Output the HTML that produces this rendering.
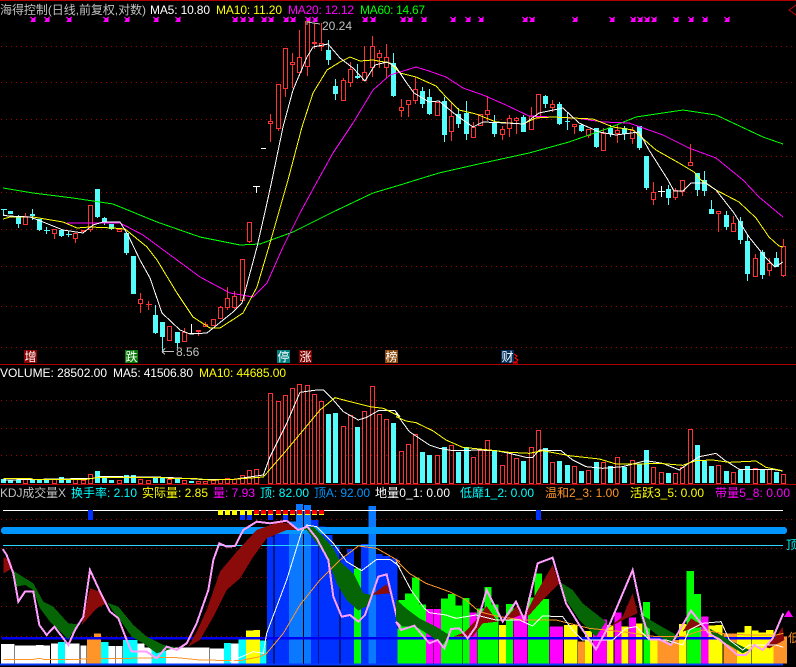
<!DOCTYPE html>
<html><head><meta charset="utf-8"><style>
html,body{margin:0;padding:0;background:#000;width:796px;height:667px;overflow:hidden}
svg{display:block}
text{font:12px "Liberation Sans","WenQuanYi Zen Hei","Noto Sans CJK SC",sans-serif}
</style></head><body>
<svg width="796" height="667" viewBox="0 0 796 667" shape-rendering="crispEdges">
<rect width="796" height="667" fill="#000"/>
<defs><path id="s" d="M-2.5-2.5l5 5M2.5-2.5l-5 5M-1-1h3v3h-3z" fill="#f0f" stroke="#f0f"/></defs>
<!-- separators and grid -->
<path d="M0 .5H796M0 364.5H796M0 484.5H796" stroke="#b00000" fill="none"/>
<path d="M1 46.5H796M1 82.5H796M1 119.5H796M1 156.5H796M1 192.5H796M1 229.5H796M1 266.5H796M1 306.5H796M1 347.5H796M1 400.5H796M1 428.5H796M1 455.5H796M1 519.5H796M1 548.5H796M1 577.5H796M1 606.5H796M1 636.5H796" stroke="#a00000" stroke-dasharray="1 4" fill="none"/>
<path d="M796 5L789 10L796 15" stroke="#c00000" fill="none"/>
<!-- stars -->
<g><use href="#s" x="33" y="19.5"/><use href="#s" x="47" y="19.5"/><use href="#s" x="69" y="19.5"/><use href="#s" x="106" y="19.5"/><use href="#s" x="127" y="19.5"/><use href="#s" x="156" y="19.5"/><use href="#s" x="178" y="19.5"/><use href="#s" x="235" y="19.5"/><use href="#s" x="243" y="19.5"/><use href="#s" x="251" y="19.5"/><use href="#s" x="264" y="19.5"/><use href="#s" x="271" y="19.5"/><use href="#s" x="286" y="19.5"/><use href="#s" x="293" y="19.5"/><use href="#s" x="308" y="19.5"/><use href="#s" x="315" y="19.5"/><use href="#s" x="365" y="19.5"/><use href="#s" x="373" y="19.5"/><use href="#s" x="403" y="19.5"/><use href="#s" x="410" y="19.5"/><use href="#s" x="424" y="19.5"/><use href="#s" x="453" y="19.5"/><use href="#s" x="468" y="19.5"/><use href="#s" x="481" y="19.5"/><use href="#s" x="525" y="19.5"/><use href="#s" x="532" y="19.5"/><use href="#s" x="575" y="19.5"/><use href="#s" x="612" y="19.5"/><use href="#s" x="633" y="19.5"/><use href="#s" x="640" y="19.5"/><use href="#s" x="647" y="19.5"/><use href="#s" x="654" y="19.5"/><use href="#s" x="676" y="19.5"/><use href="#s" x="691" y="19.5"/><use href="#s" x="705" y="19.5"/><use href="#s" x="727" y="19.5"/></g>
<!-- red wicks -->
<path fill="none" stroke="#ff3232" d="M25.5 213V225M54.5 234V239M75.5 239V243M90.5 230V232M119.5 228V232M140.5 293V313M148.5 301V310M146 304.5H152M184.5 328V342M198.5 332V336M205.5 322V327M220.5 306V319M227.5 287V310M234.5 291V309M249.5 242V243M270.5 114V142M278.5 129V131M285.5 89V97M292.5 53V88M299.5 30V73M307.5 67V76M314.5 23V49M321.5 23V51M343.5 78V80M350.5 62V87M364.5 46V81M372.5 36V77M379.5 50V68M386.5 44V78M401.5 99V117M408.5 105V117M415.5 77V104M451.5 102V141M473.5 122V127M487.5 96V121M502.5 126V140M509.5 115V137M516.5 117V134M531.5 107V130M552.5 100V112M574.5 127V134M588.5 136V138M603.5 128V133M617.5 125V143M632.5 127V144M653.5 182V205M675.5 188V200M682.5 192V196M690.5 144V166M718.5 214V232M733.5 216V223M755.5 254V258M769.5 258V276M783.5 239V277"/>
<!-- red bodies -->
<path fill="#000" stroke="#ff3232" d="M23.5 216.5h4v8h-4zM52.5 229.5h4v4h-4zM73.5 233.5h4v5h-4zM81.5 230.5h4v1h-4zM88.5 205.5h4v24h-4zM117.5 229.5h4v2h-4zM138.5 299.5h4v4h-4zM167.5 326.5h4v14h-4zM182.5 332.5h4v9h-4zM196.5 330.5h4v1h-4zM203.5 324.5h4v2h-4zM211.5 319.5h4v6h-4zM218.5 307.5h4v11h-4zM225.5 298.5h4v9h-4zM232.5 296.5h4v11h-4zM240.5 259.5h4v41h-4zM247.5 222.5h4v19h-4zM268.5 121.5h4v2h-4zM276.5 84.5h4v44h-4zM283.5 48.5h4v40h-4zM290.5 62.5h4v2h-4zM297.5 57.5h4v15h-4zM305.5 21.5h4v45h-4zM312.5 42.5h4v1h-4zM319.5 43.5h4v3h-4zM341.5 80.5h4v20h-4zM348.5 69.5h4v13h-4zM362.5 72.5h4v8h-4zM370.5 46.5h4v21h-4zM377.5 53.5h4v4h-4zM384.5 57.5h4v10h-4zM399.5 107.5h4v3h-4zM406.5 100.5h4v4h-4zM413.5 89.5h4v11h-4zM435.5 102.5h4v13h-4zM449.5 116.5h4v15h-4zM471.5 127.5h4v10h-4zM478.5 114.5h4v11h-4zM485.5 110.5h4v4h-4zM500.5 129.5h4v5h-4zM507.5 118.5h4v10h-4zM514.5 118.5h4v2h-4zM529.5 116.5h4v13h-4zM536.5 94.5h4v23h-4zM550.5 104.5h4v3h-4zM572.5 124.5h4v2h-4zM586.5 129.5h4v6h-4zM601.5 133.5h4v17h-4zM615.5 130.5h4v3h-4zM630.5 130.5h4v8h-4zM651.5 192.5h4v7h-4zM673.5 190.5h4v7h-4zM680.5 180.5h4v11h-4zM688.5 162.5h4v3h-4zM716.5 211.5h4v2h-4zM731.5 223.5h4v8h-4zM753.5 258.5h4v18h-4zM767.5 263.5h4v7h-4zM781.5 246.5h4v29h-4z"/>
<!-- cyan wicks -->
<path fill="none" stroke="#54fcfc" d="M3.5 209V216M18.5 215V228M32.5 209V220M39.5 230V231M46.5 227V234M44 230.5H50M61.5 229V237M68.5 231V237M66 234.5H72M97.5 217V218M104.5 217V225M111.5 229V230M126.5 253V255M155.5 305V334M162.5 337V353M177.5 343V348M328.5 40V65M335.5 79V100M357.5 64V79M393.5 53V97M422.5 87V108M429.5 89V115M444.5 97V142M458.5 108V128M466.5 101V140M494.5 115V137M523.5 115V132M545.5 95V108M559.5 102V125M567.5 112V130M581.5 124V132M596.5 147V148M610.5 125V137M624.5 126V140M639.5 148V150M646.5 188V190M668.5 185V205M697.5 173V196M704.5 171V196M711.5 200V214M726.5 211V230M740.5 217V244M747.5 235V281M762.5 250V279M776.5 252V267M1 209.5H7"/>
<!-- cyan bodies -->
<path fill="none" stroke="#54fcfc" stroke-width="5" d="M10.5 211V214M18.5 217V224M32.5 214V216M39.5 219V230M61.5 230V236M97.5 189V217M104.5 218V222M111.5 224V229M126.5 233V253M133.5 256V294M155.5 315V333M162.5 322V337M177.5 332V343M328.5 50V60M335.5 86V94M357.5 76V78M393.5 63V96M422.5 91V104M429.5 97V114M444.5 101V135M458.5 114V124M466.5 113V134M494.5 122V134M523.5 117V132M545.5 96V104M559.5 104V124M567.5 121V122M581.5 125V131M596.5 128V147M610.5 128V134M624.5 128V134M639.5 126V148M646.5 156V188M668.5 189V198M697.5 173V190M704.5 180V191M711.5 209V214M726.5 215V227M740.5 221V240M747.5 241V274M762.5 252V275M776.5 258V267"/>
<!-- white doji -->
<path fill="none" stroke="#fff" d="M191.5 324V333M188 333.5H195M256.5 186V193M253 186.5H260M261 148.5H266M661.5 186V197M658 191.5H665"/>
<!-- MA lines -->
<path fill="none" stroke="#0f0" d="M3 188L33 193L73 198L113 204L157 222L200 237L240 245L260 244L293 232L333 212L373 193L400 185L416 180L439 173L483 163L529 153L569 142L609 128L636 117L683 110L716 115L763 137L783 144"/>
<path fill="none" stroke="#f0f" d="M67 223L120 223L143 235L177 260L200 277L230 293L253 297L267 283L283 247L300 213L318 180L333 153L353 123L373 90L390 75L400 72L416 67L429 71L446 77L463 88L483 95L506 105L529 116L553 117L576 118L603 122L629 123L663 135L689 148L716 158L743 180L759 197L783 217"/>
<path fill="none" stroke="#ff0" d="M3 219L10 217L33 217L63 222L77 228L90 227L113 228L125 229L147 247L157 260L177 293L193 317L210 328L220 328L243 313L257 287L270 243L288 180L302 127L313 93L327 70L340 62L350 57L360 61L373 60L390 63L400 73L416 77L436 86L446 97L459 110L476 114L496 122L523 124L536 118L553 117L593 119L613 127L633 130L656 150L679 163L694 172L701 180L716 190L739 202L756 218L769 237L779 246L783 247"/>
<path fill="none" stroke="#fff" d="M3 215L8 216L30 217L43 222L63 230L83 233L93 225L103 222L120 222L128 235L140 260L150 278L162 313L180 330L190 334L207 333L233 312L242 303L257 247L267 203L272 180L283 127L293 90L307 57L313 47L328 44L340 58L353 68L365 81L375 65L387 62L396 67L406 82L414 93L429 102L439 101L456 115L473 127L483 122L506 123L524 124L539 113L563 108L579 123L599 132L616 135L639 132L649 150L668 180L674 191L683 191L691 183L706 183L716 190L734 213L749 237L766 258L775 267L783 262"/>
<!-- arrows -->
<path fill="none" stroke="#c0c0c0" d="M307 22L320 24M307 22v3M307 22h3M162 351.5H174M162 351.5l3-3M162 351.5l3 3"/>
<!-- date labels -->
<g><rect x="24" y="350" width="13" height="13" fill="#8b0000"/><rect x="125" y="350" width="13" height="13" fill="#0a7a0a"/><rect x="277" y="350" width="13" height="13" fill="#008080"/><rect x="299" y="350" width="13" height="13" fill="#800000"/><rect x="385" y="350" width="13" height="13" fill="#8b4a10"/><rect x="501" y="350" width="13" height="13" fill="#003060"/></g>
<path fill="none" stroke="#f00" d="M514 354l3 2-2 2 3 2-2 2h-3M513 363h5"/>
<g fill="#fff"><text x="24.5" y="361">增</text><text x="125.5" y="361">跌</text><text x="277.5" y="361">停</text><text x="299.5" y="361">涨</text><text x="385.5" y="361">榜</text><text x="501.5" y="361">财</text></g>
<!-- volume bars -->
<path fill="none" stroke="#54fcfc" stroke-width="5" d="M3.5 479V483M10.5 480V483M18.5 480V483M32.5 480V483M39.5 480V483M46.5 480V483M61.5 477V483M68.5 480V483M97.5 471V483M104.5 477V483M111.5 480V483M126.5 475V483M133.5 475V483M155.5 478V483M162.5 478V483M177.5 479V483M191.5 481V483M328.5 414V483M335.5 413V483M357.5 427V483M393.5 423V483M422.5 452V483M429.5 455V483M444.5 447V483M458.5 452V483M466.5 447V483M494.5 450V483M523.5 461V483M545.5 448V483M559.5 461V483M567.5 465V483M581.5 471V483M596.5 462V483M610.5 466V483M624.5 467V483M639.5 464V483M646.5 450V483M668.5 473V483M697.5 445V483M704.5 461V483M711.5 466V483M726.5 471V483M740.5 470V483M747.5 466V483M762.5 470V483M776.5 472V483"/>
<path fill="none" stroke="#ff3232" d="M23.5 479.5h4V483.5h-4zM52.5 479.5h4V483.5h-4zM73.5 478.5h4V483.5h-4zM81.5 480.5h4V483.5h-4zM88.5 474.5h4V483.5h-4zM117.5 480.5h4V483.5h-4zM138.5 479.5h4V483.5h-4zM146.5 480.5h4V483.5h-4zM167.5 479.5h4V483.5h-4zM182.5 480.5h4V483.5h-4zM196.5 481.5h4V483.5h-4zM203.5 481.5h4V483.5h-4zM211.5 480.5h4V483.5h-4zM218.5 479.5h4V483.5h-4zM225.5 478.5h4V483.5h-4zM232.5 479.5h4V483.5h-4zM240.5 475.5h4V483.5h-4zM247.5 470.5h4V483.5h-4zM254.5 469.5h4V483.5h-4zM268.5 393.5h4V483.5h-4zM276.5 401.5h4V483.5h-4zM283.5 395.5h4V483.5h-4zM290.5 388.5h4V483.5h-4zM297.5 384.5h4V483.5h-4zM305.5 385.5h4V483.5h-4zM312.5 394.5h4V483.5h-4zM319.5 401.5h4V483.5h-4zM341.5 426.5h4V483.5h-4zM348.5 415.5h4V483.5h-4zM362.5 411.5h4V483.5h-4zM370.5 386.5h4V483.5h-4zM377.5 414.5h4V483.5h-4zM384.5 419.5h4V483.5h-4zM399.5 451.5h4V483.5h-4zM406.5 444.5h4V483.5h-4zM413.5 434.5h4V483.5h-4zM435.5 455.5h4V483.5h-4zM449.5 445.5h4V483.5h-4zM471.5 457.5h4V483.5h-4zM478.5 450.5h4V483.5h-4zM485.5 440.5h4V483.5h-4zM500.5 465.5h4V483.5h-4zM507.5 452.5h4V483.5h-4zM514.5 458.5h4V483.5h-4zM529.5 447.5h4V483.5h-4zM536.5 430.5h4V483.5h-4zM550.5 462.5h4V483.5h-4zM572.5 466.5h4V483.5h-4zM586.5 470.5h4V483.5h-4zM601.5 462.5h4V483.5h-4zM615.5 457.5h4V483.5h-4zM630.5 460.5h4V483.5h-4zM651.5 467.5h4V483.5h-4zM659.5 472.5h4V483.5h-4zM673.5 473.5h4V483.5h-4zM680.5 467.5h4V483.5h-4zM688.5 429.5h4V483.5h-4zM716.5 465.5h4V483.5h-4zM731.5 472.5h4V483.5h-4zM753.5 468.5h4V483.5h-4zM767.5 469.5h4V483.5h-4zM781.5 474.5h4V483.5h-4z"/>
<!-- volume MA -->
<g transform="translate(0,360) scale(.33333)" fill="none" stroke-width="3">
<path stroke="#fff" d="M10 360L280 355L300 350L350 350L500 352L600 358L700 358L790 345L810 290L860 190L900 97L950 90L970 90L1000 120L1030 155L1075 180L1100 172L1135 152L1185 152L1200 170"/>
<path stroke="#ff0" d="M10 355L90 355L100 358L260 358L290 353L490 352L510 356L590 356L630 360L700 358L790 351L860 270L960 150L1005 113L1050 125L1110 140L1150 145L1200 170"/>
</g>
<g transform="translate(396,360) scale(.33333)" fill="none" stroke-width="3">
<path stroke="#fff" d="M0 160L40 215L100 255L130 265L170 272L200 272L240 270L300 272L340 280L390 292L410 292L430 270L495 272L530 300L570 320L620 325L680 320L710 312L750 302L800 310L850 330L875 312L910 290L960 280L985 300L1030 328L1130 328L1160 333"/>
<path stroke="#ff0" d="M0 170L30 183L60 188L110 212L150 240L200 262L300 272L340 277L400 280L440 272L520 287L610 297L660 312L730 312L790 310L860 316L900 302L950 300L1000 307L1080 303L1110 322L1160 332"/>
</g>
<!-- KDJ panel left -->
<g transform="translate(0,480) scale(.33333)">
<path fill="#fff" d="M3 492H43V550H3zM44 496H65V550H44zM65 497H108V550H65zM108 495H130V550H108zM130 497H150V550H130zM152 491H174V550H152zM195 491H238V550H195zM240 496H260V550H240zM325 498H368V550H325zM412 490H433V550H412zM433 502H455V550H433zM498 505H520V550H498zM520 502H628V550H520zM630 505H672V550H630zM693 491H716V550H693z"/>
<path fill="#0ff" d="M174 486H195V550H174zM303 486H325V550H303zM369 480H412V550H369zM455 505H498V550H455zM672 489H693V550H672zM716 476H738V550H716zM780 482H800V550H780z"/>
<path fill="#ff9428" d="M261 476H303V550H261zM282 461H303V476H282z"/>
<path fill="#ff0" d="M738 452H760V550H738zM760 450H780V550H760z"/>
<path fill="#0032ff" d="M801 170H822V550H801zM823 160H867V550H823zM933 120H955V550H933zM955 140H976V550H955zM976 165H997V550H976zM997 200H1018V550H997zM1020 230H1041V550H1020zM1041 207H1062V550H1041zM1083 192H1105V550H1083zM1128 222H1148V550H1128zM1148 228H1170V550H1148zM1170 235H1192V550H1170z"/>
<path fill="#0a78ff" d="M867 125H888V550H867zM888 72H909V550H888zM912 75H933V550H912zM1106 78H1128V550H1106z"/>
<path fill="#0f0" d="M1062 265H1083V550H1062zM1192 445H1200V550H1192z"/>
<path fill="#000" d="M43 495H45V550H43zM151 491H153V550H151zM239 491H241V550H239zM346 498H348V550H346zM628 502H630V550H628zM821 170H823V550H821zM955 140H957V550H955zM1019 200H1021V550H1019z"/>
<path fill="#0000f0" d="M5 471H1200V478H5z"/>
</g>
<!-- KDJ panel right -->
<g transform="translate(396,480) scale(.33333)">
<path fill="#0f0" d="M7 360H27V550H7zM27 340H48V550H27zM48 293H70V550H48zM70 373H90V550H70zM135 355H156V550H135zM156 342H178V550H156zM178 376H199V550H178zM200 354H221V550H200zM243 385H265V550H243zM265 321H286V550H265zM286 373H307V550H286zM330 372H352V550H330zM395 352H416V550H395zM416 280H438V550H416zM438 357H459V550H438zM741 366H762V550H741zM872 273H894V550H872zM894 342H915V550H894z"/>
<path fill="#f0f" d="M90 387H112V550H90zM113 387H135V550H113zM221 397H243V550H221zM352 405H394V550H352zM460 440H501V550H460zM590 418H633V550H590zM655 397H676V550H655zM699 412H720V550H699zM915 410H937V550H915z"/>
<path fill="#ff0" d="M308 435H330V550H308zM503 435H545V550H503zM567 453H588V550H567zM633 435H654V550H633zM676 440H698V550H676zM720 430H741V550H720zM762 480H784V550H762zM849 432H871V550H849zM937 437H958V550H937zM958 435H980V550H958zM1023 458H1045V550H1023zM1045 438H1066V550H1045zM1066 452H1088V550H1066zM1088 458H1110V550H1088zM1110 450H1132V550H1110z"/>
<path fill="#ff9428" d="M546 485H567V550H546zM785 480H849V550H785zM980 460H1023V550H980zM1132 470H1173V550H1132z"/>
<path fill="#000" d="M112 387H114V550H112zM199 376H201V550H199zM243 440H245V550H243zM307 420H309V550H307zM351 400H353V550H351zM394 350H396V550H394zM502 430H504V550H502zM589 450H591V550H589zM653 430H655V550H653zM740 430H742V550H740zM871 430H873V550H871zM980 460H982V550H980zM1066 440H1068V550H1066z"/>
<path fill="#0032ff" d="M0 400H5V471H0z"/>
<path fill="#0000f0" d="M0 471H1162V478H0z"/>
</g>
<!-- thick bar, horizontal lines -->
<rect x="1" y="527" width="786" height="7" rx="3" fill="#0096ff"/>
<path d="M3 510.5H783" stroke="#fff" fill="none"/>
<path d="M3 545.5H783" stroke="#2ad4ff" fill="none"/>
<path d="M0 664.5H783" stroke="#0a3cff" stroke-width="2" fill="none"/>
<!-- KDJ bands & lines left -->
<g transform="translate(0,480) scale(.33333)">
<path fill="#8b0a0a" d="M10 232L30 238L38 265L10 280ZM245 435L270 325L300 335L322 368L290 385ZM565 500L590 455L620 390L660 275L710 215L770 150L840 125L880 135L895 150L860 150L800 175L760 230L720 295L680 330L640 410L600 480ZM1115 345L1160 312L1170 340Z"/>
<path fill="#066606" d="M40 272L60 285L100 310L130 365L160 380L205 430L235 433L205 478L150 425L120 385L100 330L75 315L50 320ZM322 368L355 380L400 435L440 470L490 495L530 502L470 520L430 490L395 470L360 420L340 395ZM895 150L940 140L970 170L1000 205L1020 245L1060 280L1090 340L1115 345L1100 378L1075 392L1040 360L1010 310L985 240L950 190L920 150ZM1192 395L1200 420V440L1192 430Z"/>
<g fill="none">
<path stroke="#ff9428" stroke-width="3" d="M10 538L100 538L120 535L130 538L240 538L270 535L380 535L520 532L600 540L720 542L780 530L800 520L850 460L900 375L960 300L1020 240L1075 198L1130 205L1200 245"/>
<path stroke="#fff" stroke-width="3" d="M690 545L760 515L790 520L800 460L860 300L905 155L920 135L950 140L1000 190L1040 245L1085 272L1130 238L1170 238L1200 260"/>
<path stroke="#ff9eff" stroke-width="6" d="M8 207L20 225L40 280L55 365L75 335L100 335L118 435L140 465L163 440L205 495L225 450L250 410L270 270L300 335L330 395L355 415L380 480L395 515L440 515L470 535L500 500L530 510L560 490L590 430L625 330L640 240L658 190L680 200L705 198L730 150L770 125L810 130L860 122L895 150L922 140L950 175L985 240L1000 350L1025 410L1050 405L1075 425L1095 405L1135 290L1160 283L1190 410L1200 440"/>
</g>
</g>
<!-- KDJ bands & lines right -->
<g transform="translate(396,480) scale(.33333)">
<path fill="#8b0a0a" d="M170 470L205 458L240 420L272 378L305 425L260 430L230 470ZM325 420L362 378L375 405L340 418ZM385 410L420 340L470 255L490 310L440 360L400 405ZM635 445L680 410L710 340L725 400L690 415ZM860 455L885 415L925 440L890 445ZM1105 500L1140 470L1160 440L1165 480L1120 505Z"/>
<path fill="#066606" d="M0 358L30 385L70 415L120 440L160 465L140 495L100 465L60 440L20 440L0 420ZM490 305L530 330L560 370L630 425L600 470L550 420L510 360ZM730 400L780 430L850 470L825 490L790 470L740 430ZM940 445L1000 480L1060 510L1040 520L990 490L950 470Z"/>
<g fill="none">
<path stroke="#ff9428" stroke-width="3" d="M0 240L40 280L90 310L160 335L210 360L250 395L310 410L380 420L480 420L580 445L680 455L780 470L860 470L920 450L990 462L1060 465L1140 465L1162 460"/>
<path stroke="#fff" stroke-width="3" d="M0 245L45 330L85 385L100 398L150 405L180 415L240 405L300 420L370 420L410 438L440 408L500 410L530 450L560 480L650 480L690 445L720 440L760 480L810 480L860 495L880 450L920 430L975 425L1000 480L1040 510L1060 495L1140 495L1162 502"/>
<path stroke="#ff9eff" stroke-width="6" d="M0 425L15 450L55 437L100 490L125 480L145 505L165 447L190 445L215 475L240 440L272 330L320 425L360 365L385 420L425 250L470 233L510 370L550 435L600 508L640 435L710 270L740 410L760 478L790 478L825 495L885 392L940 462L970 478L1025 525L1050 525L1075 495L1100 510L1130 475L1162 400"/>
</g>
</g>
<!-- signal squares -->
<path fill="#0032ff" d="M88 510h5v10h-5zM536 510h5v10h-5zM240 514h5v6h-5zM247 514h5v6h-5zM268 514h5v6h-5zM283 514h5v6h-5z"/>
<path fill="#ff0" d="M218 510h5v5h-5zM225 510h5v5h-5zM232 510h5v5h-5zM240 510h5v5h-5zM247 510h5v5h-5zM254 514h5v1h-5zM261 514h5v1h-5zM268 514h5v1h-5zM276 514h5v1h-5zM283 514h5v1h-5zM290 514h5v1h-5zM297 514h5v1h-5zM305 514h5v1h-5zM312 514h5v1h-5zM319 514h5v1h-5z"/>
<path fill="#f00" d="M254 510h5v4h-5zM261 510h5v4h-5zM268 510h5v4h-5zM276 510h5v4h-5zM283 510h5v4h-5zM290 510h5v4h-5zM297 510h5v4h-5zM305 510h5v4h-5zM312 510h5v4h-5zM319 510h5v4h-5z"/>
<path fill="#f0f" d="M788.5 610L793 617H784Z"/>
<!-- text -->
<text x="0" y="14" fill="#c0c0c0" textLength="146">海得控制(日线,前复权,对数)</text>
<text x="150" y="14" fill="#fff" textLength="60">MA5: 10.80</text>
<text x="216" y="14" fill="#ff0" textLength="66">MA10: 11.20</text>
<text x="288" y="14" fill="#f0f" textLength="66">MA20: 12.12</text>
<text x="360" y="14" fill="#0f0" textLength="65">MA60: 14.67</text>
<text x="322" y="30" fill="#c0c0c0">20.24</text>
<text x="176" y="356" fill="#c0c0c0">8.56</text>
<text x="0" y="377" fill="#fff" textLength="107">VOLUME: 28502.00</text>
<text x="113" y="377" fill="#fff" textLength="80">MA5: 41506.80</text>
<text x="199" y="377" fill="#ff0" textLength="87">MA10: 44685.00</text>
<text x="0" y="497" fill="#c0c0c0" textLength="66">KDJ成交量X</text>
<text x="71" y="497" fill="#0ff" textLength="66">换手率: 2.10</text>
<text x="142" y="497" fill="#ff0" textLength="66">实际量: 2.85</text>
<text x="213" y="497" fill="#f0f" textLength="42">量: 7.93</text>
<text x="260" y="497" fill="#0ff" textLength="49">顶: 82.00</text>
<text x="314" y="497" fill="#0096ff" textLength="56">顶A: 92.00</text>
<text x="375" y="497" fill="#fff" textLength="75">地量0_1: 0.00</text>
<text x="460" y="497" fill="#0ff" textLength="74">低靡1_2: 0.00</text>
<text x="545" y="497" fill="#ff9428" textLength="74">温和2_3: 1.00</text>
<text x="630" y="497" fill="#ff0" textLength="74">活跃3_5: 0.00</text>
<text x="715" y="497" fill="#f0f" textLength="75">带量5_8: 0.00</text>
<text x="786" y="549" fill="#0ff">顶</text>
<text x="788" y="642" fill="#ff9428">低</text>
</svg>
</body></html>
